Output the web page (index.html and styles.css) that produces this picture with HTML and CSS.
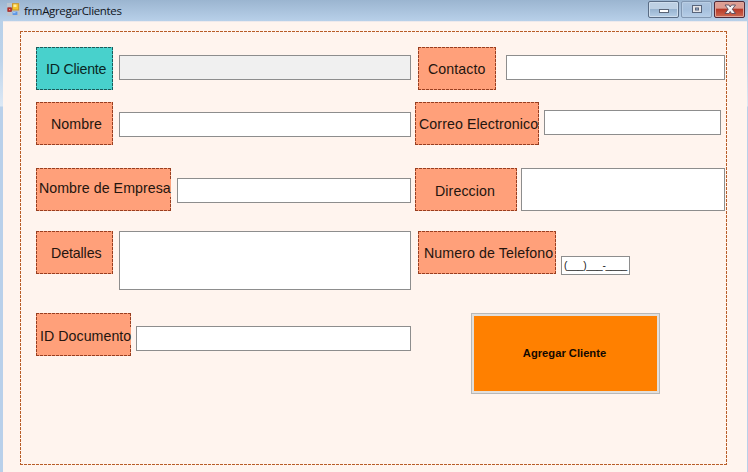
FILE: index.html
```
<!DOCTYPE html>
<html lang="es">
<head>
<meta charset="utf-8">
<title>frmAgregarClientes</title>
<link rel="stylesheet" href="styles.css">
</head>
<body>
<div class="window">
  <header class="titlebar">
    <svg class="app-icon" width="13" height="13" viewBox="0 0 13 13">
      <rect x="0" y="0" width="13" height="13" fill="#bcc6d0"/>
      <rect x="5.5" y=".7" width="6.2" height="6.3" fill="#f5c52b" stroke="#c9952b"/>
      <rect x="6.5" y="1.5" width="3" height="2.5" fill="#ffec9c"/>
      <rect x=".8" y="4.8" width="3.7" height="3.7" fill="#bd3029" stroke="#9b2828" stroke-width=".7"/>
      <rect x="2" y="6" width="1.2" height="1.2" fill="#f1a299"/>
      <rect x="5.6" y="8.6" width="4.8" height="3.4" fill="#5d96e5"/>
      <rect x="6" y="9" width="2.5" height="1.2" fill="#a0c7f8"/>
    </svg>
    <h1 class="title">frmAgregarClientes</h1>
    <div class="controls">
      <button class="control" aria-label="Minimizar"><svg width="28" height="15" viewBox="0 0 28 15"><rect x="9.5" y="7.5" width="9" height="3" fill="#fff" stroke="#596475"/></svg></button>
      <button class="control control-dim" aria-label="Maximizar"><svg width="28" height="15" viewBox="0 0 28 15"><rect x="9.500" y="3.500" width="9" height="7" fill="#e4e5e8" stroke="#58657b"/><rect x="12.500" y="6" width="3" height="2" fill="#9fbbd9" stroke="#58657b"/></svg></button>
      <button class="control control-close" aria-label="Cerrar"><svg width="28" height="15" viewBox="0 0 28 15"><path d="M9 3h4l1.200 2 1.300-2h4l-3.200 4.200 3.200 4.300h-4l-1.300-2-1.200 2H9l3.200-4.300z" fill="#f5f3f4" stroke="#574b5b" stroke-width=".9"/></svg></button>
    </div>
  </header>
  <main class="client">
    <form class="panel dashed">
      <div class="field"><label class="tag tag-id dashed"><span>ID Cliente</span></label><input class="box box-readonly" readonly></div>
      <div class="field field-inset"><label class="tag tag-contact dashed"><span>Contacto</span></label><input class="box box-contact"></div>
      <div class="field"><label class="tag tag-name dashed"><span>Nombre</span></label><input class="box box-name"></div>
      <div class="field"><label class="tag tag-mail dashed"><span>Correo Electronico</span></label><input class="box box-mail"></div>
      <div class="field"><label class="tag tag-company dashed"><span>Nombre de Empresa</span></label><input class="box box-company"></div>
      <div class="field"><label class="tag tag-address dashed"><span>Direccion</span></label><textarea class="box box-address"></textarea></div>
      <div class="field"><label class="tag tag-details dashed"><span>Detalles</span></label><textarea class="box box-details"></textarea></div>
      <div class="field field-inset"><label class="tag tag-phone dashed"><span>Numero de Telefono</span></label><div class="box box-phone">(___)___-____</div></div>
      <div class="field"><label class="tag tag-document dashed"><span>ID Documento</span></label><input class="box box-document"></div>
      <div class="field"><button class="submit" type="button">Agregar Cliente</button></div>
    </form>
  </main>
</div>
</body>
</html>
```
FILE: styles.css
```
* { box-sizing: border-box; }
body { margin: 0; overflow: hidden; font-family: "Liberation Sans", Arial, sans-serif; }
.window {
  width: 748px;
  height: 472px;
  padding: 0 1px 0 3px;
  background: linear-gradient(#9bb5d0 0, #b8d0e9 21px, #bdd3ea 60px, #dce8f5 106px, #b9d0ea 107px);
}
.titlebar { display: flex; height: 21px; padding-left: 4px; }
.app-icon { flex: none; margin-top: 3px; }
.title {
  margin: 2px 0 0 4px;
  font: 400 11.5px/17px "Open Sans", "Noto Sans", sans-serif;
  letter-spacing: -.35px;
  color: #10151c;
}
.controls { display: flex; gap: 2px; margin: 1px 2px 0 auto; }
.control {
  width: 31px;
  height: 17px;
  padding: 0;
  border: 1px solid #596c84;
  border-radius: 2px;
  background: linear-gradient(#bdd0e3 0 45%, #98b4d0 50%, #b6cee6);
  box-shadow: inset 0 0 0 1px #cfdeed;
}
.control svg { display: block; margin: 0 auto; }
.control-dim { border-color: #8197b1; background: linear-gradient(#adc4dd, #a6c0dc 50%, #b6cee8); box-shadow: inset 0 0 0 1px #b9cee4; }
.control-close { border-color: #502a38; background: linear-gradient(#dd9d92 0 40%, #b83b29 50%, #ce6a52); box-shadow: inset 0 0 0 1px #dfa59a; }
.client { height: 451px; padding: 9px 0 0 17px; background: #fff4ee; border-top: 1px solid #eee9ec; }
.dashed {
  --dash: #b85c27;
  background-image:
    repeating-linear-gradient(90deg, var(--dash) 0 3px, transparent 3px 4px),
    repeating-linear-gradient(90deg, var(--dash) 0 3px, transparent 3px 4px),
    repeating-linear-gradient(var(--dash) 0 3px, transparent 3px 4px),
    repeating-linear-gradient(var(--dash) 0 3px, transparent 3px 4px);
  background-size: 100% 1px, 100% 1px, 1px 100%, 1px 100%;
  background-position: top, bottom, left, right;
  background-repeat: no-repeat;
}
.panel {
  display: grid;
  grid-template-columns: 379px 312px;
  grid-template-rows: 55px 66px 63px 82px 82px;
  width: 707px;
  height: 434px;
  padding: 16px 0 0 16px;
}
.field { display: flex; align-items: flex-start; }
.field-inset { padding-left: 3px; }
.tag {
  --dash: #983e20;
  display: flex;
  flex: none;
  width: 77px;
  height: 43px;
  padding: 13px 0 0 10px;
  background-color: #ffa07a;
  font-size: 14.2px;
  line-height: 18px;
  letter-spacing: .1px;
  color: #24150f;
  white-space: nowrap;
}
.tag span { height: 18px; background: #ffa07a; }
.tag-id { --dash: #1c5b5b; background-color: #48d1cc; color: #092624; letter-spacing: -.2px; }
.tag-id span { background: #48d1cc; }
.tag-name, .tag-details { padding-left: 15px; }
.tag-details { letter-spacing: -.1px; }
.tag-mail { width: 124px; padding-left: 4px; }
.tag-company { width: 135px; padding: 11px 0 0 3px; letter-spacing: .05px; }
.tag-address { width: 102px; padding: 14px 0 0 20px; }
.tag-phone { width: 138px; padding-left: 6px; }
.tag-document { width: 95px; padding: 14px 0 0 4px; letter-spacing: .05px; }
.tag-contact { width: 78px; }
.box {
  display: block;
  flex: none;
  width: 292px;
  height: 25px;
  margin: 8px 0 0 6px;
  padding: 0;
  border: 1px solid #8d8d8d;
  border-radius: 0;
  background: #fff;
  resize: none;
}
.box-readonly { background: #f0f0f0; }
.box-name { margin-top: 10px; }
.box-company { width: 234px; margin-top: 10px; }
.box-details { height: 59px; margin-top: 0; }
.box-document { width: 275px; margin: 13px 0 0 5px; }
.box-contact { width: 219px; margin-left: 10px; }
.box-mail { width: 177px; margin-left: 5px; }
.box-address { width: 204px; height: 43px; margin: 0 0 0 4px; }
.box-phone {
  width: 69px;
  height: 19px;
  margin: 25px 0 0 5px;
  padding-left: 2px;
  font-size: 10.2px;
  line-height: 17px;
  letter-spacing: -.3px;
  color: #222;
  white-space: nowrap;
}
.submit {
  width: 189px;
  height: 81px;
  margin: 0 0 0 56px;
  padding: 0 2px 1px 0;
  border: 1px solid #b8b8b8;
  border-radius: 0;
  background: #ff8000;
  box-shadow: inset 0 0 0 2px #e2dfdc;
  font: 700 11.2px/14px "Liberation Sans", Arial, sans-serif;
  color: #110800;
}
```
